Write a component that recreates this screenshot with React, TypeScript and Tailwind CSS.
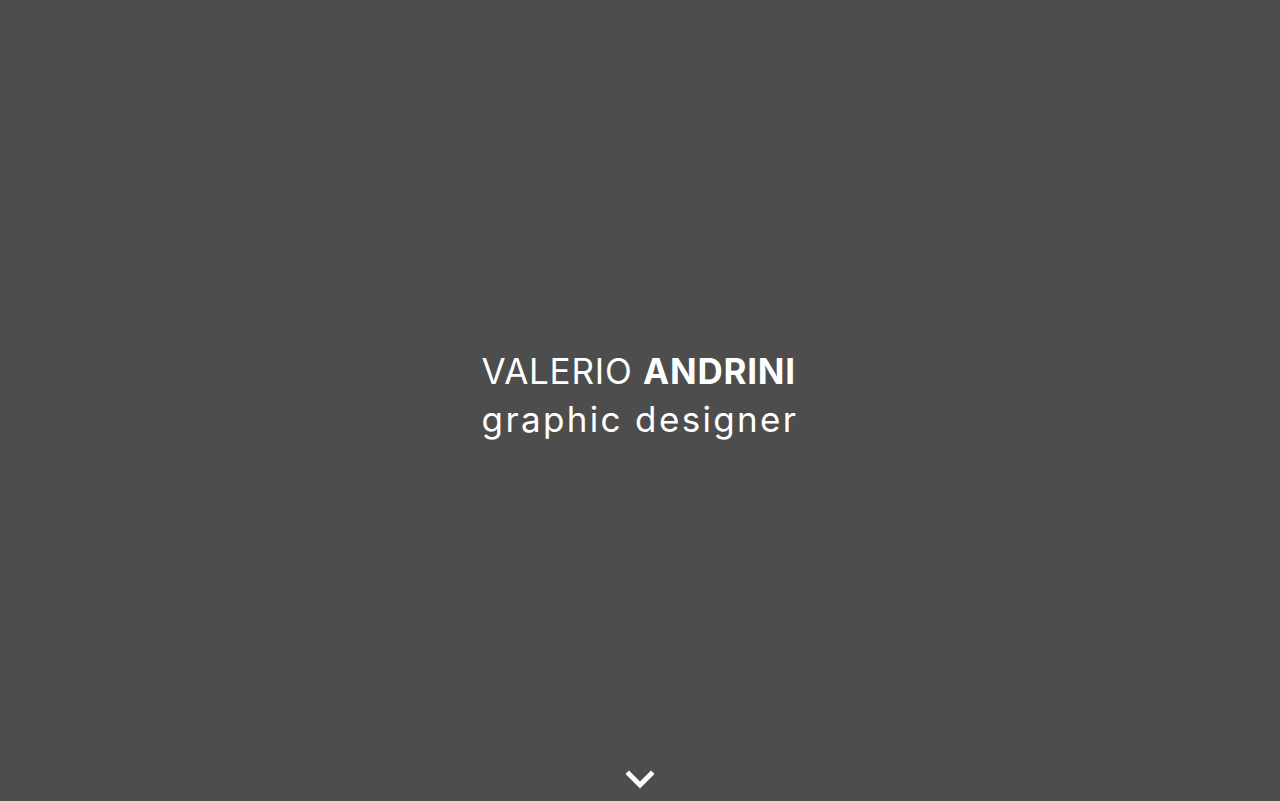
export default function App() {
  return (
    <div className="relative flex h-[801px] w-full items-center justify-center bg-[#4d4d4d] font-['Inter',sans-serif] text-white">
      <div className="mb-[12px] text-[35px] leading-[48px] tracking-[0.022em]">
        <div>
          <span className="font-normal">VALERIO</span> <span className="font-bold">ANDRINI</span>
        </div>
        <div className="font-normal tracking-[0.067em]">graphic designer</div>
      </div>
      <div className="absolute bottom-[12px] left-1/2 -translate-x-1/2">
        <svg width="30" height="20" viewBox="0 0 30 20" fill="none">
          <polyline points="4,5 15,16 26,5" stroke="white" strokeWidth="5" strokeLinecap="square" />
        </svg>
      </div>
    </div>
  );
}
